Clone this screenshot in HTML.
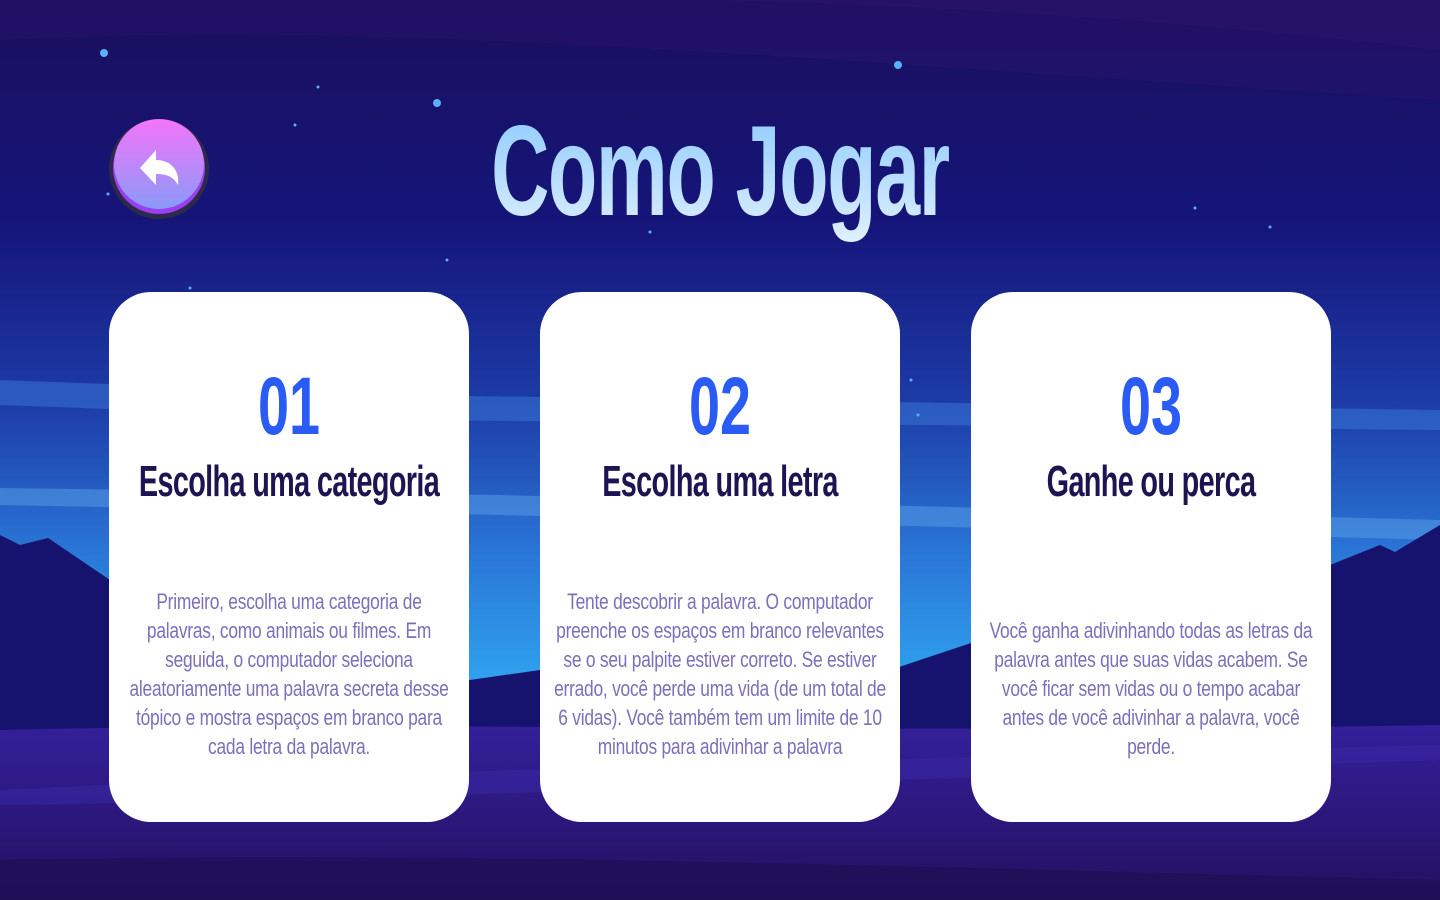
<!DOCTYPE html>
<html><head><meta charset="utf-8"><style>
*{margin:0;padding:0;box-sizing:border-box}
body{width:1440px;height:900px;overflow:hidden;position:relative;font-family:"Liberation Sans",sans-serif;background:#16136e}
.bg{position:absolute;inset:0}
.card{position:absolute;top:292px;width:360px;height:530px;background:#fff;border-radius:42px}
.sx{position:absolute;left:50%;white-space:nowrap;text-align:center}
.num{top:362px;font-size:82px;font-weight:bold;color:#2a5cf5;transform:translateX(-50%) scaleX(0.68);line-height:90px}
.h{top:456px;font-size:44px;font-weight:bold;color:#1e1452;transform:translateX(-50%) scaleX(0.655);line-height:52px;letter-spacing:-1px}
.p{font-size:22px;color:#7c70bb;transform:translateX(-50%) scaleX(0.79);line-height:29px;letter-spacing:-0.3px}
</style></head><body>
<svg class="bg" width="1440" height="900" viewBox="0 0 1440 900">
<defs>
<linearGradient id="sky" x1="0" y1="0" x2="0" y2="1">
<stop offset="0" stop-color="#1a0f5c"/><stop offset="0.25" stop-color="#15157a"/><stop offset="0.45" stop-color="#1d3ca8"/><stop offset="0.62" stop-color="#2a78d8"/><stop offset="0.8" stop-color="#31aef5"/><stop offset="1" stop-color="#31aef5"/>
</linearGradient>
<linearGradient id="gr" x1="0" y1="0" x2="0" y2="1"><stop offset="0" stop-color="#33209a"/><stop offset="1" stop-color="#241060"/></linearGradient>
<linearGradient id="tt" x1="0" y1="0" x2="0" y2="1"><stop offset="0" stop-color="#88c8ff"/><stop offset="1" stop-color="#e0f0ff"/></linearGradient>
<linearGradient id="bt" x1="0" y1="0" x2="0" y2="1"><stop offset="0" stop-color="#f474fa"/><stop offset="1" stop-color="#8a9af8"/></linearGradient>
</defs>
<rect width="1440" height="900" fill="url(#sky)"/>
<path d="M0 0H1440V50C1100 10 700 -10 300 0Z" fill="#281264" opacity="0.7"/>
<path d="M0 40C400 20 800 60 1440 100V0H0Z" fill="#2a1470" opacity="0.4"/>
<path d="M0 380L400 395L1440 410V430L400 420L0 405Z" fill="#3a7ad8" opacity="0.5"/>
<path d="M0 488L500 495L1440 520V540L500 515L0 505Z" fill="#5aa0e8" opacity="0.5"/>
<path d="M0 535L20 545L48 538L110 580L200 620L400 690L540 670L620 700L700 725L800 700L920 660L980 640L1060 690L1130 640L1330 565L1380 545L1395 552L1440 525V740H0Z" fill="#16136e"/>
<path d="M0 730C400 720 900 735 1440 725V900H0Z" fill="url(#gr)"/>
<path d="M0 790C400 770 900 760 1440 745V760C900 780 400 800 0 805Z" fill="#3a28a8" opacity="0.5"/>
<path d="M0 860C500 850 1000 870 1440 880V900H0Z" fill="#1e0e50" opacity="0.6"/>
<g fill="#5ab0f8"><circle cx="104" cy="53" r="4"/><circle cx="437" cy="103" r="4"/><circle cx="898" cy="65" r="4"/><circle cx="318" cy="87" r="1.5"/><circle cx="295" cy="125" r="1.5"/><circle cx="108" cy="194" r="1.5"/><circle cx="190" cy="288" r="1.5"/><circle cx="447" cy="260" r="1.5"/><circle cx="1195" cy="208" r="1.5"/><circle cx="1270" cy="227" r="1.5"/><circle cx="911" cy="380" r="1.5"/><circle cx="918" cy="415" r="1.5"/><circle cx="650" cy="232" r="1.5"/></g>
<text x="720" y="215" text-anchor="middle" font-family="Liberation Sans" font-weight="bold" font-size="128" fill="url(#tt)" transform="translate(720 0) scale(0.63 1) translate(-720 0)" letter-spacing="-2">Como Jogar</text>
<circle cx="159" cy="169" r="50" fill="#2b2a4a"/>
<circle cx="159" cy="168" r="46" fill="#9a3ef0"/>
<circle cx="159" cy="164" r="45" fill="url(#bt)"/>
<path d="M140 168L156 150V160C172 160 180 172 178 185C173 176 166 174 156 174V185Z" fill="#fff"/>
</svg>

<div class="card" style="left:109px"></div>
<div class="card" style="left:540px"></div>
<div class="card" style="left:971px"></div>

<div class="sx num" style="left:289px">01</div>
<div class="sx num" style="left:720px">02</div>
<div class="sx num" style="left:1151px">03</div>
<div class="sx h" style="left:289px">Escolha uma categoria</div>
<div class="sx h" style="left:720px">Escolha uma letra</div>
<div class="sx h" style="left:1151px">Ganhe ou perca</div>

<div class="sx p" style="left:289px;top:587px">Primeiro, escolha uma categoria de<br>palavras, como animais ou filmes. Em<br>seguida, o computador seleciona<br>aleatoriamente uma palavra secreta desse<br>tópico e mostra espaços em branco para<br>cada letra da palavra.</div>
<div class="sx p" style="left:720px;top:587px">Tente descobrir a palavra. O computador<br>preenche os espaços em branco relevantes<br>se o seu palpite estiver correto. Se estiver<br>errado, você perde uma vida (de um total de<br>6 vidas). Você também tem um limite de 10<br>minutos para adivinhar a palavra</div>
<div class="sx p" style="left:1151px;top:616px">Você ganha adivinhando todas as letras da<br>palavra antes que suas vidas acabem. Se<br>você ficar sem vidas ou o tempo acabar<br>antes de você adivinhar a palavra, você<br>perde.</div>
</body></html>
